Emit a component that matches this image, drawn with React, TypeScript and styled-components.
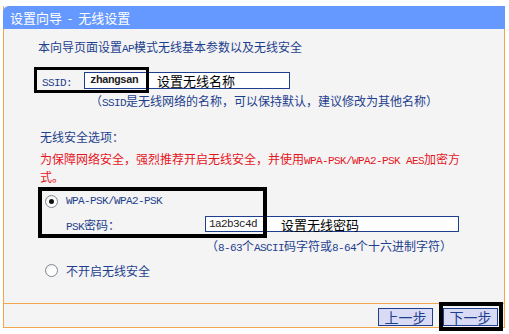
import * as React from "react";
import styled, { createGlobalStyle } from "styled-components";

const Colors = {
  TEXT: "#1e3f8e",
  RED: "#e6141e",
  TITLE: "#6699ff",
  BORDER: "#f2a54a",
  PANEL: "#f4f4f4",
  BUTTON: "#d8daf6",
};

const CJK = `"Noto Sans CJK SC", "Noto Sans", sans-serif`;
const MONO = `"Liberation Mono", "DejaVu Sans Mono", monospace`;

const GlobalStyle = createGlobalStyle`
  html, body {
    margin: 0;
    padding: 0;
    background: #fff;
  }
  body {
    width: 509px;
    height: 334px;
    overflow: hidden;
    font-family: ${CJK};
    font-size: 12px;
    color: ${Colors.TEXT};
  }
`;

// latin runs: half-width like the original bitmap font (6px per char)
const En = styled.span<{ $bold?: boolean }>`
  font-family: ${MONO};
  font-size: 11px;
  letter-spacing: -0.6px;
  line-height: 1;
  font-weight: ${(p) => (p.$bold ? 700 : 400)};
`;

const Panel = styled.div`
  margin: 6px 0 0 3px;
  width: 500px;
  background: ${Colors.PANEL};
  border-left: 1px solid ${Colors.BORDER};
  border-right: 1px solid ${Colors.BORDER};
  border-bottom: 1px solid ${Colors.BORDER};
`;

const TitleBar = styled.div`
  margin: 0 -1px;
  height: 23px;
  line-height: 23px;
  padding-left: 7px;
  background: ${Colors.TITLE};
  border-top-left-radius: 6px;
  color: #fff;
  font-size: 13px;
  white-space: pre;
`;

const Body = styled.div`
  padding: 10px 0 25px 34px;
`;

const Line = styled.div<{ $indent?: number; $top?: number }>`
  height: 16px;
  line-height: 16px;
  padding-left: ${(p) => p.$indent ?? 0}px;
  margin-top: ${(p) => p.$top ?? 0}px;
  white-space: nowrap;
`;

const Warning = styled.div`
  margin-top: 5px;
  padding-left: 2px;
  width: 428px;
  line-height: 18px;
  color: ${Colors.RED};
`;

const SsidRow = styled.div`
  position: relative;
  margin-top: 12px;
  height: 26px;
  padding-left: 4px;
  display: flex;
  align-items: center;
`;

const FieldLabel = styled.div<{ $w: number }>`
  width: ${(p) => p.$w}px;
  flex: none;
`;

const TextBox = styled.div<{ $w: number; $h: number; $pad: number }>`
  box-sizing: border-box;
  width: ${(p) => p.$w}px;
  height: ${(p) => p.$h}px;
  padding-left: ${(p) => p.$pad}px;
  background: #fff;
  border: 1px solid ${Colors.TEXT};
  display: flex;
  align-items: center;
  color: #222;
`;

const Note = styled.span<{ $gap: number }>`
  margin-left: ${(p) => p.$gap}px;
  font-size: 13px;
  color: #000;
`;

const Highlight = styled.div<{ $l: number; $t: number; $w: number; $h: number; $b: number }>`
  position: absolute;
  left: ${(p) => p.$l}px;
  top: ${(p) => p.$t}px;
  width: ${(p) => p.$w}px;
  height: ${(p) => p.$h}px;
  box-sizing: border-box;
  border: ${(p) => p.$b}px solid #000;
  pointer-events: none;
`;

const OptionGroup = styled.div`
  position: relative;
  margin-top: 1px;
`;

const RadioRow = styled.div<{ $h: number; $top?: number }>`
  height: ${(p) => p.$h}px;
  margin-top: ${(p) => p.$top ?? 0}px;
  padding-left: 7px;
  display: flex;
  align-items: center;
  gap: 8px;
`;

const Radio = styled.span<{ $checked?: boolean }>`
  position: relative;
  box-sizing: border-box;
  width: 13px;
  height: 13px;
  flex: none;
  border-radius: 50%;
  border: 1px solid #7f8a96;
  background: radial-gradient(circle at 60% 65%, #fff 40%, #e2e2e2 100%);

  &::after {
    content: "";
    display: ${(p) => (p.$checked ? "block" : "none")};
    position: absolute;
    left: 3px;
    top: 3px;
    width: 5px;
    height: 5px;
    border-radius: 50%;
    background: #111;
  }
`;

const PskRow = styled.div`
  height: 18px;
  padding-left: 28px;
  display: flex;
  align-items: center;
`;

const Footer = styled.div`
  height: 24px;
  border-top: 1px solid ${Colors.BORDER};
  padding: 4px 6px 0 0;
  box-sizing: border-box;
  display: flex;
  justify-content: flex-end;
  align-items: flex-start;
  gap: 10px;
`;

const ButtonWrap = styled.div`
  position: relative;
`;

const Button = styled.button`
  box-sizing: border-box;
  width: 55px;
  height: 18px;
  padding: 0;
  background: ${Colors.BUTTON};
  border: 1px solid ${Colors.TEXT};
  font-family: ${CJK};
  font-size: 14px;
  line-height: 16px;
  color: ${Colors.TEXT};
`;

export default function App() {
  return (
    <>
      <GlobalStyle />
      <Panel>
        <TitleBar>设置向导  -  无线设置</TitleBar>
        <Body>
          <Line>
            本向导页面设置<En>AP</En>模式无线基本参数以及无线安全
          </Line>

          <SsidRow>
            <FieldLabel $w={42}>
              <En>SSID:</En>
            </FieldLabel>
            <TextBox $w={206} $h={17} $pad={5}>
              <En $bold>zhangsan</En>
              <Note $gap={19}>设置无线名称</Note>
            </TextBox>
            <Highlight $l={-4} $t={0} $w={115} $h={26} $b={3} />
          </SsidRow>

          <Line $indent={52}>
            （<En>SSID</En>是无线网络的名称，可以保持默认，建议修改为其他名称）
          </Line>

          <Line $indent={2} $top={20}>
            无线安全选项：
          </Line>
          <Warning>
            为保障网络安全，强烈推荐开启无线安全，并使用<En>WPA-PSK/WPA2-PSK AES</En>加密方式。
          </Warning>

          <OptionGroup>
            <RadioRow $h={28}>
              <Radio $checked />
              <En>WPA-PSK/WPA2-PSK</En>
            </RadioRow>
            <PskRow>
              <FieldLabel $w={139}>
                <En>PSK</En>密码：
              </FieldLabel>
              <TextBox $w={254} $h={16} $pad={3}>
                <En>1a2b3c4d</En>
                <Note $gap={24}>设置无线密码</Note>
              </TextBox>
            </PskRow>
            <Highlight $l={0} $t={0} $w={229} $h={51} $b={4} />
          </OptionGroup>

          <Line $indent={168} $top={5}>
            （<En>8-63</En>个<En>ASCII</En>码字符或<En>8-64</En>个十六进制字符）
          </Line>

          <RadioRow $h={16} $top={8}>
            <Radio />
            <span>不开启无线安全</span>
          </RadioRow>
        </Body>

        <Footer>
          <ButtonWrap>
            <Button>上一步</Button>
          </ButtonWrap>
          <ButtonWrap>
            <Button>下一步</Button>
            <Highlight $l={-4} $t={-6} $w={64} $h={29} $b={4} />
          </ButtonWrap>
        </Footer>
      </Panel>
    </>
  );
}
